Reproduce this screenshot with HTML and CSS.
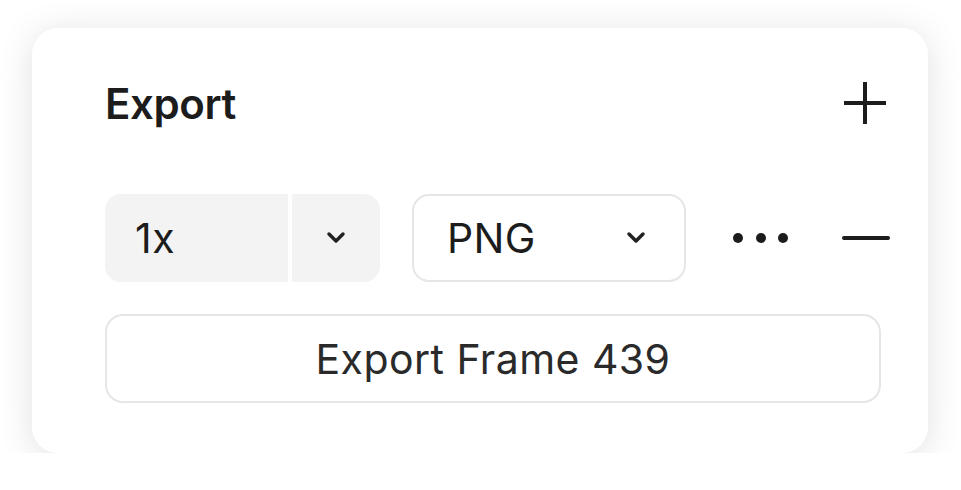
FILE: index.html
```html
<!DOCTYPE html>
<html>
<head>
<meta charset="utf-8">
<link rel="stylesheet" href="styles.css">
</head>
<body>
<div class="card">
  <div class="header">
    <div class="title">Export</div>
    <svg class="plus" width="42" height="42" viewBox="0 0 42 42"><path d="M21 0V42M0 21H42" stroke="#1c1c1c" stroke-width="4"/></svg>
  </div>
  <div class="row">
    <div class="scale">
      <div class="scale-value">1x</div>
      <div class="scale-arrow">
        <svg width="20" height="14" viewBox="0 0 20 14"><path d="M3 3L10 10L17 3" fill="none" stroke="#222" stroke-width="3.5" stroke-linecap="round" stroke-linejoin="round"/></svg>
      </div>
    </div>
    <div class="format">
      <span class="format-value">PNG</span>
      <svg width="20" height="14" viewBox="0 0 20 14"><path d="M3 3L10 10L17 3" fill="none" stroke="#222" stroke-width="3.5" stroke-linecap="round" stroke-linejoin="round"/></svg>
    </div>
    <div class="more">
      <span class="dot"></span><span class="dot"></span><span class="dot"></span>
    </div>
    <svg class="minus" width="48" height="6" viewBox="0 0 48 6"><path d="M2 3H46" stroke="#1c1c1c" stroke-width="4" stroke-linecap="round"/></svg>
  </div>
  <div class="export-btn">Export Frame 439</div>
</div>
</body>
</html>
```
FILE: styles.css
```css
html, body {
  margin: 0;
  padding: 0;
  background: #ffffff;
}
body {
  font-family: Inter, "Noto Sans", sans-serif;
  color: #1c1c1c;
  padding: 28px 0 0 32px;
}
.card {
  width: 896px;
  height: 425px;
  box-sizing: border-box;
  background: #ffffff;
  border-radius: 26px;
  box-shadow: 0 4px 36px rgba(0, 0, 0, 0.12);
  padding: 51px 42px 0 73px;
}
.header {
  display: flex;
  align-items: center;
  justify-content: space-between;
  height: 50px;
}
.title {
  font-size: 42px;
  font-weight: 600;
  line-height: 50px;
  letter-spacing: -0.4px;
}
.plus {
  margin-top: -2px;
}
.row {
  display: flex;
  align-items: center;
  margin-top: 65px;
  height: 88px;
}
.row > * {
  flex-shrink: 0;
}
.scale {
  display: flex;
  width: 275px;
  height: 88px;
  border-radius: 16px;
  overflow: hidden;
}
.scale-value {
  width: 183px;
  background: #f3f3f3;
  padding-left: 30px;
  box-sizing: border-box;
  font-size: 41px;
  line-height: 88px;
  letter-spacing: 0.5px;
}
.scale-arrow {
  margin-left: 4px;
  flex: 1;
  background: #f3f3f3;
  display: flex;
  align-items: center;
  justify-content: center;
}
.format {
  margin-left: 32px;
  width: 274px;
  height: 88px;
  box-sizing: border-box;
  border: 2.5px solid #e6e6e6;
  border-radius: 17px;
  display: flex;
  align-items: center;
  justify-content: space-between;
  padding: 0 38px 0 33px;
  font-size: 41px;
  letter-spacing: 0.3px;
}
.more {
  margin-left: 47px;
  display: flex;
  gap: 12.5px;
}
.dot {
  width: 10px;
  height: 10px;
  border-radius: 50%;
  background: #1c1c1c;
}
.minus {
  margin-left: 54px;
}
.export-btn {
  margin-top: 32px;
  width: 776px;
  height: 89px;
  box-sizing: border-box;
  border: 2.5px solid #e6e6e6;
  border-radius: 18px;
  display: flex;
  align-items: center;
  justify-content: center;
  font-size: 41px;
  letter-spacing: 0.45px;
  color: #2a2a2a;
}
```
